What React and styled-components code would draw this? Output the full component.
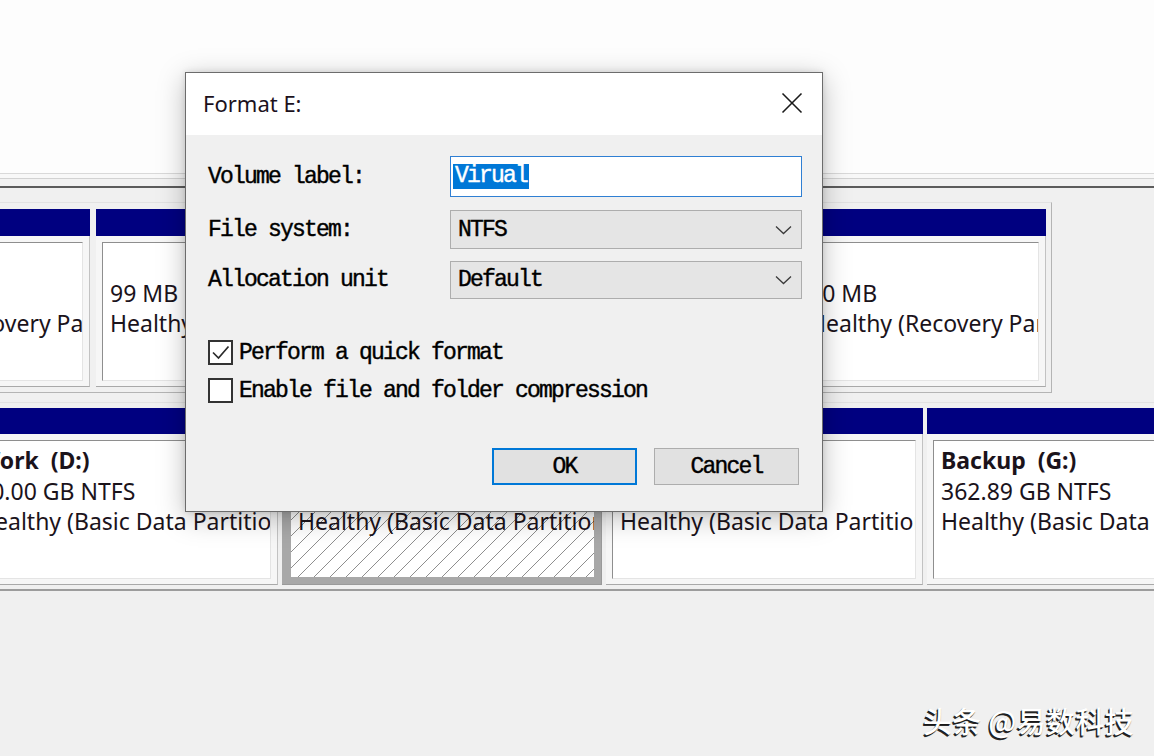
import React from "react";
import styled, { createGlobalStyle, css } from "styled-components";

const Global = createGlobalStyle`
  html, body { margin: 0; padding: 0; }
  body {
    width: 1154px;
    height: 756px;
    overflow: hidden;
    background: #f0f0f0;
    font-family: "Noto Sans", "Open Sans", sans-serif;
  }
  * { box-sizing: border-box; }
`;

const Screen = styled.div`
  position: relative;
  width: 1154px;
  height: 756px;
  overflow: hidden;
  background: #f0f0f0;
  display: flex;
  flex-direction: column;
`;

const TopPane = styled.div`
  flex: none;
  height: 174px;
  background: #fdfdfd;
  border-bottom: 1px solid #d9d9d9;
`;

const SplitterLight = styled.div`
  flex: none;
  height: 5px;
  background: #f8f8f8;
  border-bottom: 1px solid #d2d2d2;
`;

const SplitterBand = styled.div`
  flex: none;
  height: 9px;
  background: #f2f2f2;
  border-bottom: 2px solid #5c5c5c;
`;

const LowerPane = styled.div`
  flex: 1;
  display: flex;
  flex-direction: column;
  padding-top: 14px;
  background: #f0f0f0;
`;

const DiskRow = styled.div`
  flex: none;
  display: flex;
  gap: ${(p) => p.$gap}px;
  margin-left: ${(p) => p.$offset}px;
  margin-top: ${(p) => p.$top || 0}px;
  width: ${(p) => p.$width}px;
  padding: ${(p) => p.$pad};
  border: 1px solid #e2e2e2;
  ${(p) =>
    p.$boxed &&
    css`
      border-right-color: #b4b4b4;
      border-bottom-color: #b4b4b4;
    `}
  ${(p) =>
    p.$open &&
    css`
      border-right: none;
      border-bottom: 2px solid #9c9c9c;
    `}
`;

const Partition = styled.div`
  flex: ${(p) => (p.$w ? `0 0 ${p.$w}px` : "1 1 auto")};
  min-width: 0;
  display: flex;
  flex-direction: column;
`;

const Bar = styled.div`
  height: ${(p) => p.$h}px;
  background: #000080;
`;

const Frame = styled.div`
  display: flex;
  height: 151px;
  padding: 6px 6px 5px 6px;
  background: #f6f6f6;
  border-right: 1px solid #c2c2c2;
  border-bottom: 1px solid #a9a9a9;
  ${(p) =>
    p.$selected &&
    css`
      background: #a8a8a8;
      padding: 7px 7px 7px 9px;
      border-color: #9a9a9a;
    `}
`;

const Box = styled.div`
  flex: 1;
  min-width: 0;
  overflow: hidden;
  background: #fff;
  border-top: 1px solid #8e8e8e;
  border-left: 1px solid #8e8e8e;
  border-right: 1px solid #e4e4e4;
  border-bottom: 1px solid #e4e4e4;
  padding: 4px 7px;
  ${(p) =>
    p.$hatched &&
    css`
      border: none;
      padding: 4px 7px;
      background: repeating-linear-gradient(
        135deg,
        #ffffff 0px,
        #ffffff 10.4px,
        #8e8e8e 10.4px,
        #8e8e8e 11.3px
      );
    `}
`;

const Line = styled.div`
  height: 30.5px;
  line-height: 30.5px;
  font-family: "Noto Sans", "Open Sans", sans-serif;
  font-size: 23px;
  color: #1b131b;
  white-space: pre;
  font-weight: ${(p) => (p.$bold ? 700 : 400)};
`;

/* ---------- Dialog ---------- */

const Dialog = styled.div`
  position: absolute;
  left: 185px;
  top: 72px;
  width: 638px;
  height: 440px;
  border: 1px solid #6c6c6c;
  background: #f0f0f0;
  box-shadow: 0 6px 26px rgba(0, 0, 0, 0.26), 0 0 6px rgba(0, 0, 0, 0.12);
  display: flex;
  flex-direction: column;
`;

const TitleBar = styled.div`
  flex: none;
  height: 62px;
  background: #ffffff;
  display: flex;
  align-items: center;
  justify-content: space-between;
  padding: 0 19px 0 17px;
`;

const Title = styled.div`
  font-family: "Noto Sans", "Open Sans", sans-serif;
  font-size: 22px;
  color: #1c111c;
  margin-top: -2px;
`;

const CloseButton = styled.div`
  width: 22px;
  height: 22px;
  display: flex;
  align-items: center;
  justify-content: center;
  margin-top: -2px;
`;

const Body = styled.div`
  flex: 1;
  display: flex;
  flex-direction: column;
  padding: 21px 20px 0 22px;
  font-family: "Liberation Mono", "DejaVu Sans Mono", monospace;
  font-size: 23px;
  letter-spacing: -1.8px;
  color: #000;
  -webkit-text-stroke: 0.4px #000;
`;

const Form = styled.div`
  display: grid;
  grid-template-columns: 242px 1fr;
  grid-template-rows: 42px 39px 38px;
  row-gap: 12px;
  align-items: center;
`;

const Label = styled.div`
  white-space: pre;
  line-height: 24px;
`;

const TextInput = styled.div`
  align-self: start;
  height: 41px;
  background: #fff;
  border: 1px solid #2f7fd3;
  display: flex;
  align-items: center;
  padding-left: 2px;
`;

const Selected = styled.span`
  background: #0078d7;
  color: #fff;
  -webkit-text-stroke: 0.4px #fff;
  line-height: 25px;
  padding: 0 2px 0 2px;
`;

const Combo = styled.div`
  height: ${(p) => p.$h}px;
  background: #e5e5e5;
  border: 1px solid #adadad;
  display: flex;
  align-items: center;
  justify-content: space-between;
  padding: 0 9px 0 7px;
`;

const Checks = styled.div`
  margin-top: 41px;
  display: flex;
  flex-direction: column;
  gap: 13px;
`;

const CheckRow = styled.div`
  display: flex;
  align-items: center;
  gap: 6px;
  height: 25px;
  white-space: pre;
`;

const CheckBox = styled.div`
  flex: none;
  width: 25px;
  height: 25px;
  background: #fff;
  border: 2px solid #333;
  display: flex;
  align-items: center;
  justify-content: center;
`;

const Buttons = styled.div`
  margin-top: 45px;
  display: flex;
  justify-content: flex-end;
  gap: 17px;
  padding-right: 3px;
`;

const Button = styled.div`
  width: 145px;
  height: 37px;
  background: #e1e1e1;
  border: 1px solid #adadad;
  display: flex;
  align-items: center;
  justify-content: center;
  ${(p) =>
    p.$primary &&
    css`
      border: 2px solid #0078d7;
    `}
`;

const Watermark = styled.div`
  position: absolute;
  right: 20px;
  top: 699px;
  font-family: "Noto Sans CJK SC", "Noto Sans", sans-serif;
  font-size: 29px;
  font-weight: 500;
  letter-spacing: 0.3px;
  color: #ffffff;
  white-space: pre;
  text-shadow: -1.5px 1.5px 0 rgba(15, 15, 15, 0.9), -0.5px 0.5px 1px rgba(0, 0, 0, 0.7);
`;

const Chevron = () => (
  <svg width="17" height="10" viewBox="0 0 17 10">
    <polyline points="1,1.5 8.5,8.5 16,1.5" fill="none" stroke="#3a3a3a" strokeWidth="1.3" />
  </svg>
);

const CloseIcon = () => (
  <svg width="22" height="22" viewBox="0 0 22 22">
    <line x1="1.5" y1="1.5" x2="20.5" y2="20.5" stroke="#1a1a1a" strokeWidth="1.6" />
    <line x1="20.5" y1="1.5" x2="1.5" y2="20.5" stroke="#1a1a1a" strokeWidth="1.6" />
  </svg>
);

const Tick = () => (
  <svg width="21" height="21" viewBox="0 0 21 21">
    <polyline points="3,10.5 8.5,16 18.5,4.5" fill="none" stroke="#2a2a2a" strokeWidth="1.7" />
  </svg>
);

const PartitionCell = ({ w, barH, lines, selected }) => (
  <Partition $w={w}>
    <Bar $h={barH} />
    <Frame $selected={selected}>
      <Box $hatched={selected}>
        {lines.map((l, i) => (
          <Line key={i} $bold={i === 0}>
            {l || " "}
          </Line>
        ))}
      </Box>
    </Frame>
  </Partition>
);

export default function App() {
  return (
    <>
      <Global />
      <Screen>
        <TopPane />
        <SplitterLight />
        <SplitterBand />
        <LowerPane>
          <DiskRow $gap={6} $offset={-163} $width={1215} $pad="6px 5px 5px 5px" $boxed>
            <PartitionCell w={247} barH={27} lines={["", "450 MB", "Healthy (Recovery Partition)"]} />
            <PartitionCell barH={27} lines={["", "99 MB", "Healthy (EFI System Partition)"]} />
            <PartitionCell w={251} barH={27} lines={["", "50 MB", "Healthy (Recovery Partition)"]} />
          </DiskRow>
          <DiskRow $gap={4} $offset={-41} $top={9} $width={1265} $pad="5px 0 4px 4px" $open>
            <PartitionCell w={314} barH={26} lines={["Work  (D:)", "50.00 GB NTFS", "Healthy (Basic Data Partition)"]} />
            <PartitionCell w={320} barH={26} selected lines={["Virual  (E:)", "120.00 GB NTFS", "Healthy (Basic Data Partition)"]} />
            <PartitionCell w={317} barH={26} lines={["Data  (F:)", "200.00 GB NTFS", "Healthy (Basic Data Partition)"]} />
            <PartitionCell barH={26} lines={["Backup  (G:)", "362.89 GB NTFS", "Healthy (Basic Data Partition)"]} />
          </DiskRow>
        </LowerPane>

        <Dialog>
          <TitleBar>
            <Title>Format E:</Title>
            <CloseButton>
              <CloseIcon />
            </CloseButton>
          </TitleBar>
          <Body>
            <Form>
              <Label>Volume label:</Label>
              <TextInput>
                <Selected>Virual</Selected>
              </TextInput>
              <Label>File system:</Label>
              <Combo $h={39}>
                <span>NTFS</span>
                <Chevron />
              </Combo>
              <Label>Allocation unit</Label>
              <Combo $h={38}>
                <span>Default</span>
                <Chevron />
              </Combo>
            </Form>
            <Checks>
              <CheckRow>
                <CheckBox>
                  <Tick />
                </CheckBox>
                Perform a quick format
              </CheckRow>
              <CheckRow>
                <CheckBox />
                Enable file and folder compression
              </CheckRow>
            </Checks>
            <Buttons>
              <Button $primary>OK</Button>
              <Button>Cancel</Button>
            </Buttons>
          </Body>
        </Dialog>

        <Watermark>头条 @易数科技</Watermark>
      </Screen>
    </>
  );
}
